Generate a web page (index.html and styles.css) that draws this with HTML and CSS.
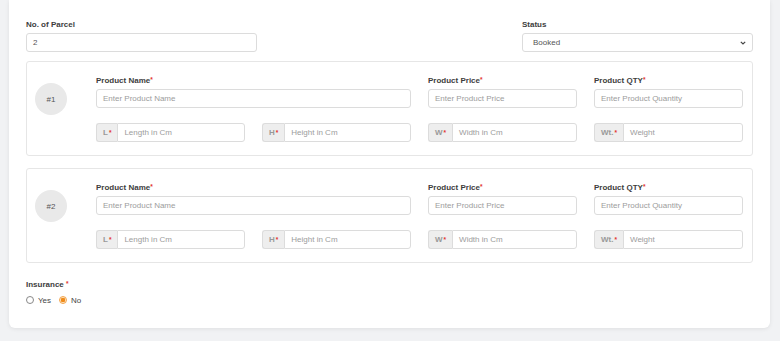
FILE: index.html
```html
<!DOCTYPE html>
<html>
<head>
<meta charset="utf-8">
<link rel="stylesheet" href="styles.css">
</head>
<body>
<div class="card">
  <div class="top-row">
    <div class="field">
      <div class="label">No. of Parcel</div>
      <div class="input"><span class="value">2</span></div>
    </div>
    <div></div>
    <div class="field">
      <div class="label">Status</div>
      <div class="input select">
        <span class="value">Booked</span>
        <svg class="chev" width="6" height="4" viewBox="0 0 6 4"><path d="M0.8 0.8 L3 3 L5.2 0.8" fill="none" stroke="#444" stroke-width="1.2"/></svg>
      </div>
    </div>
  </div>

  <div class="parcel">
    <div class="num">#1</div>
    <div class="fields">
      <div class="field span2">
        <div class="label">Product Name<span class="req">*</span></div>
        <div class="input"><span class="ph">Enter Product Name</span></div>
      </div>
      <div class="field">
        <div class="label">Product Price<span class="req">*</span></div>
        <div class="input"><span class="ph">Enter Product Price</span></div>
      </div>
      <div class="field">
        <div class="label">Product QTY<span class="req">*</span></div>
        <div class="input"><span class="ph">Enter Product Quantity</span></div>
      </div>
      <div class="group"><span class="addon">L<span class="req">*</span></span><div class="input grp"><span class="ph">Length in Cm</span></div></div>
      <div class="group"><span class="addon">H<span class="req">*</span></span><div class="input grp"><span class="ph">Height in Cm</span></div></div>
      <div class="group"><span class="addon">W<span class="req">*</span></span><div class="input grp"><span class="ph">Width in Cm</span></div></div>
      <div class="group"><span class="addon">Wt.<span class="req">*</span></span><div class="input grp"><span class="ph">Weight</span></div></div>
    </div>
  </div>

  <div class="parcel">
    <div class="num">#2</div>
    <div class="fields">
      <div class="field span2">
        <div class="label">Product Name<span class="req">*</span></div>
        <div class="input"><span class="ph">Enter Product Name</span></div>
      </div>
      <div class="field">
        <div class="label">Product Price<span class="req">*</span></div>
        <div class="input"><span class="ph">Enter Product Price</span></div>
      </div>
      <div class="field">
        <div class="label">Product QTY<span class="req">*</span></div>
        <div class="input"><span class="ph">Enter Product Quantity</span></div>
      </div>
      <div class="group"><span class="addon">L<span class="req">*</span></span><div class="input grp"><span class="ph">Length in Cm</span></div></div>
      <div class="group"><span class="addon">H<span class="req">*</span></span><div class="input grp"><span class="ph">Height in Cm</span></div></div>
      <div class="group"><span class="addon">W<span class="req">*</span></span><div class="input grp"><span class="ph">Width in Cm</span></div></div>
      <div class="group"><span class="addon">Wt.<span class="req">*</span></span><div class="input grp"><span class="ph">Weight</span></div></div>
    </div>
  </div>

  <div class="insurance">
    <div class="label">Insurance <span class="req">*</span></div>
    <div class="radios">
      <span class="radio"></span><span class="rlabel">Yes</span>
      <span class="radio on"></span><span class="rlabel">No</span>
    </div>
  </div>
</div>
</body>
</html>
```

FILE: styles.css
```css
* { box-sizing: border-box; }
html, body { margin: 0; padding: 0; }
body {
  background: #f1f2f4;
  font-family: "Liberation Sans", Arial, sans-serif;
  font-size: 8px;
  color: #333;
  width: 780px;
  height: 341px;
  overflow: hidden;
}
.card {
  margin-left: 9px;
  width: 761px;
  height: 328px;
  background: #fff;
  border-radius: 0 0 6px 6px;
  box-shadow: 0 1px 4px rgba(0,0,0,0.08);
  padding: 19px 17px 0 17px;
}
.top-row {
  display: grid;
  grid-template-columns: 231px 231px 231px;
  column-gap: 17px;
  margin-bottom: 9px;
}
.label {
  font-weight: bold;
  font-size: 8px;
  line-height: 11px;
  height: 11px;
  color: #3d3d3d;
  margin-bottom: 3px;
}
.req {
  color: #e3342f;
  font-weight: bold;
  font-size: 6.5px;
  line-height: 0;
  vertical-align: 1px;
}
.input {
  height: 19px;
  border: 1px solid #dcdcdc;
  border-radius: 3px;
  background: #fff;
  display: flex;
  align-items: center;
  padding-left: 6px;
  line-height: 11px;
}
.value { color: #555; }
.ph { color: #9c9c9c; }
.select { padding-left: 10px; padding-right: 6px; justify-content: space-between; }
.chev { display: block; }
.parcel {
  display: flex;
  align-items: flex-start;
  border: 1px solid #e6e6e6;
  border-radius: 3px;
  padding: 13px 9px 13px 8px;
  margin-bottom: 12px;
}
.num {
  width: 32px;
  height: 32px;
  border-radius: 50%;
  background: #e9e9e9;
  color: #555;
  font-size: 8px;
  display: flex;
  align-items: center;
  justify-content: center;
  margin-top: 8px;
  margin-right: 29px;
  flex: none;
}
.fields {
  display: grid;
  grid-template-columns: 149px 149px 149px 149px;
  column-gap: 17px;
  row-gap: 15px;
}
.span2 { grid-column: span 2; }
.group { display: flex; height: 19px; }
.addon {
  display: flex;
  align-items: center;
  background: #eeeeee;
  border: 1px solid #dcdcdc;
  border-right: none;
  border-radius: 3px 0 0 3px;
  padding: 0 6px 0 6px;
  color: #999;
  font-weight: bold;
}
.addon .req { margin-left: 1px; }
.input.grp {
  flex: 1;
  border-radius: 0 3px 3px 0;
}
.insurance { padding-top: 4px; }
.insurance .label { margin-bottom: 4px; }
.radios { display: flex; align-items: center; height: 12px; }
.radio {
  width: 8px;
  height: 8px;
  border-radius: 50%;
  border: 1px solid #888;
  background: #fff;
  margin-right: 4px;
  flex: none;
}
.radio.on {
  border-color: #f3a54c;
  background: radial-gradient(circle, #f08c1a 0 2px, #fbe3c4 2.5px);
}
.rlabel { color: #444; margin-right: 8px; line-height: 11px; }
```
